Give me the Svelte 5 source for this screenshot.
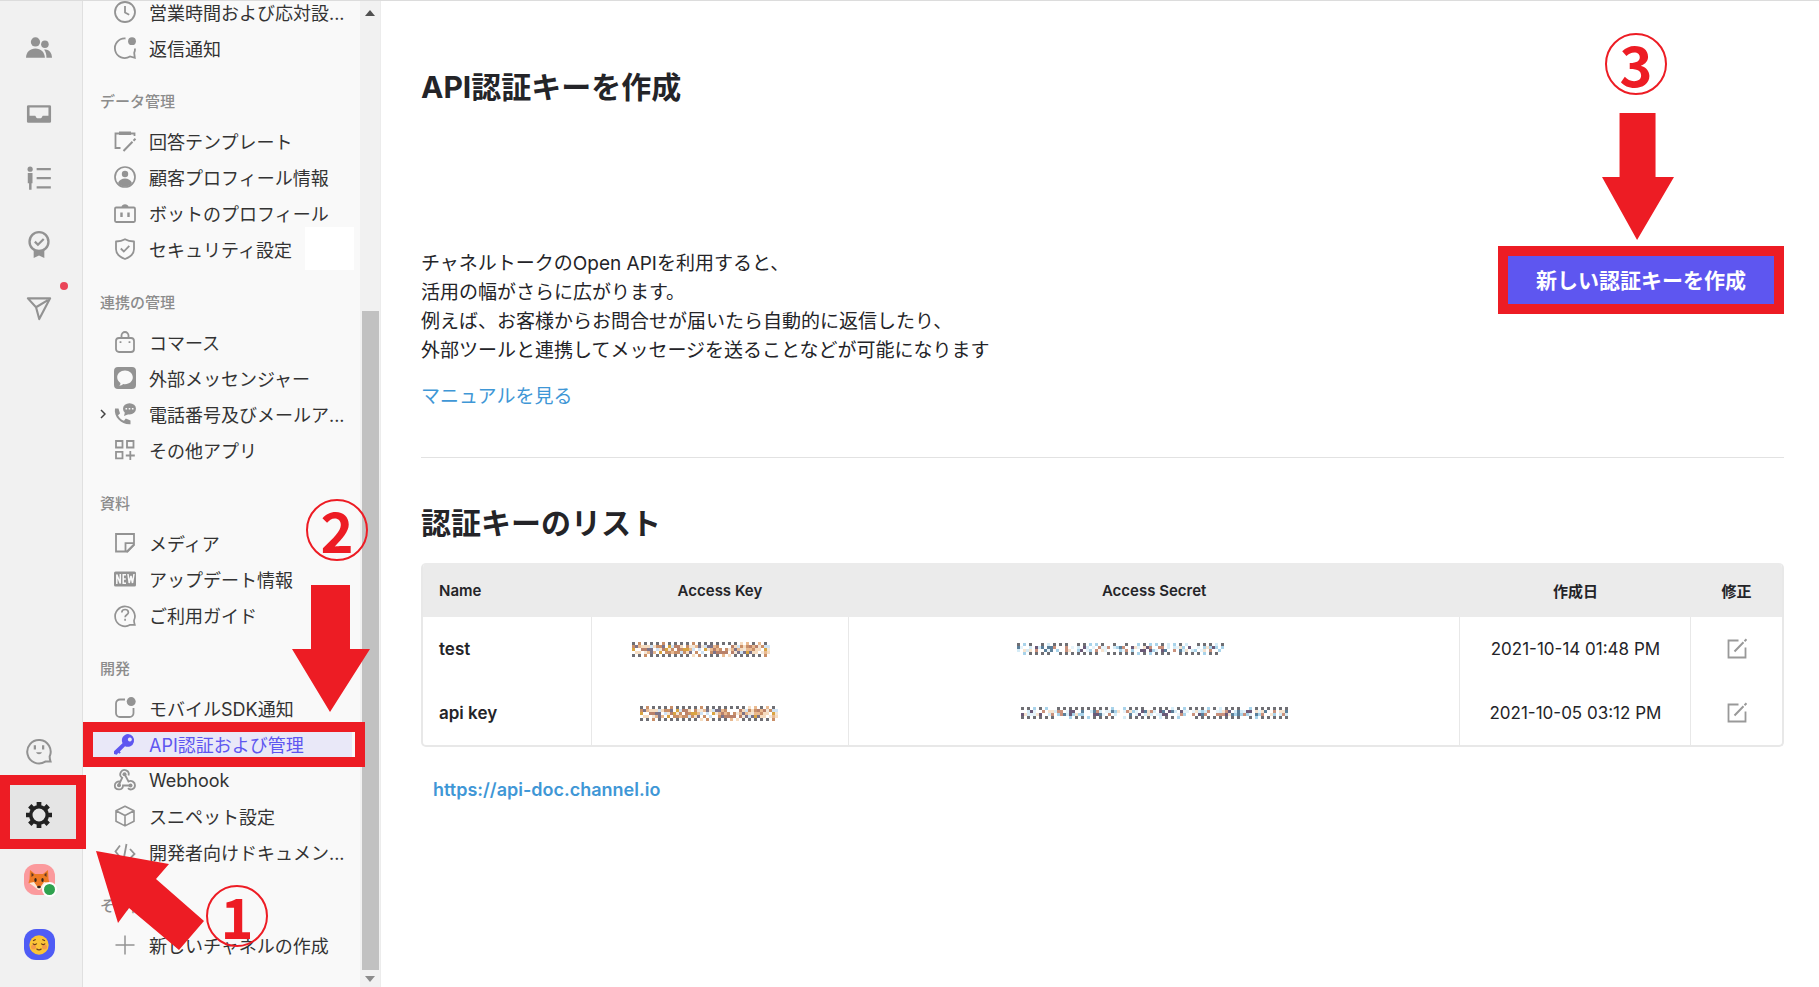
<script lang="ts">
  type NavItem = { icon: string; label: string; active?: boolean; expandable?: boolean; masked?: boolean }
  type NavGroup = { title: string; items: NavItem[] }
  type Masked = { seed: number; width: number; ink: number; rows: number; warm: boolean }

  const railTop = [
    { icon: 'people', label: '顧客' },
    { icon: 'inbox', label: '受信箱' },
    { icon: 'team', label: 'チーム' },
    { icon: 'badge', label: '実績' },
    { icon: 'send', label: '配信', dot: true },
  ]

  const groups: NavGroup[] = [
    {
      title: '',
      items: [
        { icon: 'clock', label: '営業時間および応対設...' },
        { icon: 'reply', label: '返信通知' },
      ],
    },
    {
      title: 'データ管理',
      items: [
        { icon: 'template', label: '回答テンプレート' },
        { icon: 'profile', label: '顧客プロフィール情報' },
        { icon: 'bot', label: 'ボットのプロフィール' },
        { icon: 'shield', label: 'セキュリティ設定', masked: true },
      ],
    },
    {
      title: '連携の管理',
      items: [
        { icon: 'bag', label: 'コマース' },
        { icon: 'messenger', label: '外部メッセンジャー' },
        { icon: 'phone', label: '電話番号及びメールア...', expandable: true },
        { icon: 'apps', label: 'その他アプリ' },
      ],
    },
    {
      title: '資料',
      items: [
        { icon: 'media', label: 'メディア' },
        { icon: 'new', label: 'アップデート情報' },
        { icon: 'help', label: 'ご利用ガイド' },
      ],
    },
    {
      title: '開発',
      items: [
        { icon: 'sdk', label: 'モバイルSDK通知' },
        { icon: 'key', label: 'API認証および管理', active: true },
        { icon: 'webhook', label: 'Webhook' },
        { icon: 'box', label: 'スニペット設定' },
        { icon: 'code', label: '開発者向けドキュメン...' },
      ],
    },
    {
      title: 'その他',
      items: [{ icon: 'plus', label: '新しいチャネルの作成' }],
    },
  ]

  const keys: { name: string; key: Masked; secret: Masked; created: string }[] = [
    {
      name: 'test',
      key: { seed: 7, width: 175, ink: 138, rows: 5, warm: true },
      secret: { seed: 23, width: 274, ink: 207, rows: 4, warm: false },
      created: '2021-10-14 01:48 PM',
    },
    {
      name: 'api key',
      key: { seed: 7, width: 159, ink: 138, rows: 5, warm: true },
      secret: { seed: 91, width: 267, ink: 267, rows: 4, warm: false },
      created: '2021-10-05 03:12 PM',
    },
  ]

  const warmTones = ['#f6dcc0', '#e9b98f', '#c98f68', '#fff', '#f3e6d8', '#d9a441', '#b9816a', '#cfe3f5', '#7d7488', '#fff']
  const coolTones = ['#fff', '#d5ecf7', '#a9d3ea', '#fff', '#f6e3cf', '#c9917c', '#5b7f9a', '#fff', '#6b5a78', '#e6f3fa']

  // Mosaic cells for a hidden key, dashed on the first and last row
  function mosaic(m: Masked) {
    let s = m.seed
    const next = () => (s = (s * 1103515245 + 12345) % 2147483648) / 2147483648
    const tones = m.warm ? warmTones : coolTones
    const cells: { x: number; y: number; fill: string }[] = []
    for (let c = 0; c < m.ink / 3; c++) {
      for (let r = 0; r < m.rows; r++) {
        const edge = r === 0 || r === m.rows - 1
        const pick = next()
        let fill = tones[Math.floor(pick * tones.length)]
        if (edge) fill = c % 2 ? '#fff' : pick > 0.3 ? '#6f6f74' : fill
        cells.push({ x: c * 3, y: r * 3, fill })
      }
    }
    return cells
  }
</script>

{#snippet icon(name: string, size = 22)}
  <svg
    class="icon"
    width={size}
    height={size}
    viewBox="0 0 22 22"
    fill="none"
    stroke="currentColor"
    stroke-width="1.8"
    aria-hidden="true"
  >
    {#if name === 'people'}
      <g fill="currentColor" stroke="none">
        <circle cx="8" cy="5" r="3.9" /><circle cx="16" cy="7" r="3.2" />
        <path d="M0 18.500c0-5 3.500-8 8-8s7.800 3 8 8z" /><path d="M15.300 11.500c4-.8 6.700 2.500 6.700 7h-4.700c0-3-.6-5-2-7z" />
      </g>
    {:else if name === 'inbox'}
      <path
        fill="currentColor"
        stroke="none"
        fill-rule="evenodd"
        d="M2 3.500h18a1.200 1.200 0 0 1 1.200 1.200v12.600a1.200 1.200 0 0 1-1.200 1.200H2a1.200 1.200 0 0 1-1.200-1.200V4.700A1.200 1.200 0 0 1 2 3.500zM3 5.500v7h4.700c.6 0 .7 2 1.800 2h3c1.100 0 1.200-2 1.800-2H19v-7z"
      />
    {:else if name === 'team'}
      <circle cx="3.500" cy="2.700" r="2.200" fill="currentColor" stroke="none" />
      <path d="M1.500 6h4v8.500h-.8V20H2.600v-5.500H1.500z" fill="currentColor" stroke="none" />
      <path d="M9 2.700h12M9 10.300h12M9 18h12" stroke-width="1.900" />
    {:else if name === 'badge'}
      <circle cx="11" cy="9" r="8" stroke-width="2" /><path d="m7.500 9 2.600 2.600L15 6.800" stroke-width="1.900" />
      <path d="M6.500 15.800h9v7L11 20.700l-4.500 2.100z" fill="currentColor" stroke="none" />
    {:else if name === 'send'}
      <path d="M1.600 2h18.800L11.200 19.500 8.500 9.500zM8.500 9.500l10-6" stroke-linejoin="round" />
    {:else if name === 'smile'}
      <path d="M20.800 20.800h-4.500A9.900 9.900 0 1 1 20 16.500c0 1.800.3 2.500.8 4.300z" stroke-width="1.700" />
      <path d="M7.500 7v3.500M14.500 7v3.500" stroke-width="1.900" /><path d="M8.500 13h5c-.7 2.200-4.300 2.200-5 0z" fill="currentColor" stroke="none" />
    {:else if name === 'gear'}
      <circle cx="11" cy="11" r="7" stroke-width="3" />
      <path d="M11 0v4M11 18v4M0 11h4M18 11h4M3.200 3.200l3 3M15.800 15.800l3 3M18.800 3.200l-3 3M6.200 15.800l-3 3" stroke-width="4" />
    {:else if name === 'clock'}
      <circle cx="11" cy="11" r="10" /><path d="M11 5v6.500l4.200 2.300" />
    {:else if name === 'reply'}
      <path d="M11.500 1.500A9.800 9.800 0 1 0 16 19.500l4.800 1.300-.6-5a9 9 0 0 0 .8-4.300" />
      <circle cx="18" cy="4.200" r="3.900" fill="currentColor" stroke="none" />
    {:else if name === 'template'}
      <path d="M6.500 18H1.500V3.500h19V6" /><path d="M5 1.500h12v3.500H5z" fill="currentColor" stroke="none" />
      <path d="m9.500 21 9-9.300M19.500 10.700l2-2" stroke-width="2" />
    {:else if name === 'profile'}
      <circle cx="11" cy="11" r="10" stroke-width="1.700" /><circle cx="11" cy="8" r="3.200" fill="currentColor" stroke="none" />
      <path d="M4 17c2-6 12-6 14 0-3.500 5-10.500 5-14 0z" fill="currentColor" stroke="none" />
    {:else if name === 'bot'}
      <rect x="1" y="5.500" width="20" height="14.500" rx="1.200" /><path d="M7.500 5c.3-3.800 6.700-3.800 7 0z" fill="currentColor" stroke="none" />
      <path d="M7.500 10.500v4.500M14.500 10.500v4.500" stroke-width="2.400" />
    {:else if name === 'shield'}
      <path d="M11 1.200c3 1.800 6 2.200 9 2.300v7.500c0 5.500-4 8.200-9 10-5-1.800-9-4.500-9-10V3.500c3-.1 6-.5 9-2.300z" stroke-linejoin="round" />
      <path d="m6.800 10.500 3 3 5.500-5.700" />
    {:else if name === 'bag'}
      <rect x="2" y="7" width="18" height="14" rx="3" /><path d="M7.500 7V4.500a3.500 3.500 0 0 1 7 0V7M6.500 10.200v1.800M15.500 10.200v1.800" />
    {:else if name === 'messenger'}
      <path
        d="M4 0h14a4 4 0 0 1 4 4v14a4 4 0 0 1-4 4H4a4 4 0 0 1-4-4V4a4 4 0 0 1 4-4zm7 3.500c-4.500 0-7.800 3-7.800 6.800 0 2.400 1.300 4.400 3.200 5.600.2 1-.4 2-1.200 2.800 1.700 0 3-.7 3.900-1.700.6.100 1.300.2 1.900.2 4.500 0 7.800-3.100 7.800-6.900S15.500 3.500 11 3.500z"
        fill="currentColor"
        stroke="none"
        fill-rule="evenodd"
      />
    {:else if name === 'phone'}
      <path
        d="M1 5.500h3.500l1.500 5-2 1.700c1.500 2.800 3.300 4.500 6 5.600l1.800-2.200 4.700 1.800v3.800c-8.500.8-17-7-15.500-15.700z"
        fill="currentColor"
        stroke="none"
      />
      <ellipse cx="15.500" cy="5.800" rx="6.500" ry="5.600" fill="currentColor" stroke="none" />
      <path d="m11 9-1 4 5-2z" fill="currentColor" stroke="none" />
      <path d="M11.500 5.800h1.600M14.700 5.800h1.600M17.900 5.800h1.600" stroke="#f9f9f9" stroke-width="1.600" />
    {:else if name === 'apps'}
      <path d="M2 2h6.500v6.500H2zM13 2h6.500v6.500H13zM2 12.800h6.500v6.500H2zM16.300 12v9M11.800 16.500h9" />
    {:else if name === 'media'}
      <path d="M2 2h18v11l-6.500 6.500H2zM11.500 19.500v-8.300H20" />
      <path d="m12.500 20 7.500-7.500" />
    {:else if name === 'new'}
      <rect x="0" y="3.500" width="22" height="15" rx="1.500" fill="currentColor" stroke="none" />
      <path
        d="M2.800 16V6.500L6.300 15.500V6M12 6.700H9.200v8.600H12M9.200 11h2.600M14 6l1.200 9 1.800-7 1.500 7L20 6"
        stroke="#f9f9f9"
        stroke-width="1.500"
      />
    {:else if name === 'help'}
      <path d="M20.800 20.800h-4.600A9.900 9.900 0 1 1 20 16.500c0 1.800.3 2.500.8 4.300z" stroke-width="1.700" />
      <path d="M7.800 8.500c0-4 6.600-4 6.600 0 0 2.300-3.300 2.300-3.300 4.700M11.100 14.800v2" stroke-width="1.700" />
    {:else if name === 'sdk'}
      <path d="M11 2.500H6a4 4 0 0 0-4 4V16a4 4 0 0 0 4 4h9.500a4 4 0 0 0 4-4v-5" />
      <circle cx="17.200" cy="4.600" r="4.500" fill="currentColor" stroke="none" />
    {:else if name === 'key'}
      <path
        d="M14 1a6.400 6.400 0 1 1-3 12.200l-5.200 5.200 1 1-1.500 1.300-1-1-1.500 2L0 21v-2.800l8.500-8A6.400 6.400 0 0 1 14 1zm1.800 3.500a2 2 0 1 0 .1 0z"
        fill="currentColor"
        stroke="none"
        fill-rule="evenodd"
      />
    {:else if name === 'webhook'}
      <path d="M14.500 6.500a4.200 4.200 0 1 0-6.300 2.200L5 15.500M10.500 5l4 7.500c3-1.500 6.500.5 6.500 3.800 0 4-4.800 5.500-7 2.800M6.500 12.500c-3-.6-5.700 1.200-5.700 4 0 5 8 5.500 8.200 0h7" />
      <g fill="currentColor" stroke="none"><circle cx="10.500" cy="5.300" r="2" /><circle cx="5" cy="16.300" r="2" /><circle cx="16.500" cy="16.500" r="2" /></g>
    {:else if name === 'box'}
      <path d="m11 1.200 9 4.500v10.600l-9 4.600-9-4.600V5.700zM2 5.700l9 4.800 9-4.800M11 10.500v10.400" stroke-linejoin="round" stroke-width="1.600" />
    {:else if name === 'code'}
      <path d="M6 4.500 1.500 10.500l6.500 8M16 8l4.500 5-5 5M12.500 3l-3 16" />
    {:else if name === 'plus'}
      <path d="M11 1.500v19M1.500 11h19" stroke-width="1.500" />
    {:else if name === 'edit'}
      <path d="M12.500 2.500h-10v17h17v-10" /><path d="m8.500 13.500 9-9.300M18.500 3.200l2-2" stroke-width="2" />
    {/if}
  </svg>
{/snippet}

{#snippet downArrow()}
  <path d="M19 0h39v64h20L38 127 0 64h19z" fill="#ed1c24" />
{/snippet}

{#snippet masked(m: Masked)}
  <svg class="masked" width={m.width} height={m.rows * 3} role="img" aria-label="非表示">
    {#each mosaic(m) as cell}
      <rect x={cell.x} y={cell.y} width="3" height="3" fill={cell.fill} />
    {/each}
  </svg>
{/snippet}

<div class="app">
  <nav class="rail" aria-label="メイン">
    {#each railTop as item}
      <button class="rail-btn" aria-label={item.label}>
        {@render icon(item.icon, 26)}
        {#if item.dot}<span class="unread"></span>{/if}
      </button>
    {/each}
    <span class="spacer"></span>
    <button class="rail-btn" aria-label="サポート">{@render icon('smile', 26)}</button>
    <div class="step">
      <button class="rail-btn current" aria-label="設定">{@render icon('gear', 26)}</button>
      <span class="frame frame-settings"></span>
      <svg class="arrow arrow-settings" width="108" height="99" aria-hidden="true">
        <path d="M0 0l73 13-13 15 48 42-25 29-50-42-11 15z" fill="#ed1c24" />
      </svg>
      <span class="number number-settings">1</span>
    </div>
    <button class="rail-btn" aria-label="チャネル">
      <span class="avatar pink">
        <svg width="22" height="22" viewBox="0 0 22 22" aria-hidden="true">
          <path d="M2 1l5 4h8l5-4 .5 9 1 4-5.500 3-4 4h-2l-4-4L.5 14l1-4z" fill="#ed7a25" />
          <path d="M3.500 3.500 6 6 3.500 8zM18.500 3.500 16 6l2.500 2z" fill="#5c3427" />
          <path d="M1 14l5-1 3.500 5L11 17l1.500 1L16 13l5 1-5 3.500-4 3.500h-2l-4-3.500z" fill="#fbe9d8" />
          <ellipse cx="7.500" cy="11" rx="1.200" ry="1.900" fill="#33251f" /><ellipse cx="14.500" cy="11" rx="1.200" ry="1.900" fill="#33251f" />
          <ellipse cx="11" cy="18" rx="1.900" ry="1.200" fill="#33251f" />
        </svg>
        <span class="online"></span>
      </span>
    </button>
    <button class="rail-btn" aria-label="マイプロフィール">
      <span class="avatar blue">
        <svg width="20" height="20" viewBox="0 0 20 20" aria-hidden="true">
          <circle cx="10" cy="10" r="9.700" fill="#fbc437" />
          <circle cx="4.500" cy="12" r="2.500" fill="#f59a4a" /><circle cx="15.500" cy="12" r="2.500" fill="#f59a4a" />
          <path d="M3.800 8.500c1 1.400 3 1.400 4 0M12.200 8.500c1 1.400 3 1.400 4 0M7.500 13.700c1.500 1.300 3.500 1.300 5 0M4 5.800l2.700-1.300M16 5.800l-2.700-1.300" fill="none" stroke="#6b3d1c" stroke-width="1.200" />
        </svg>
      </span>
    </button>
  </nav>

  <aside class="sidebar">
    <nav class="menu" aria-label="設定">
      {#each groups as group}
        {#if group.title}<h3>{group.title}</h3>{/if}
        <ul>
          {#each group.items as item}
            <li class:active={item.active}>
              {#if item.expandable}
                <svg class="chevron" width="6" height="10" viewBox="0 0 6 10" aria-hidden="true">
                  <path d="m1 1 4 4-4 4" fill="none" stroke="#444" stroke-width="1.500" />
                </svg>
              {/if}
              <a href="#{item.icon}">{@render icon(item.icon)}<span>{item.label}</span></a>
              {#if item.masked}<span class="patch"></span>{/if}
              {#if item.active}
                <span class="frame frame-api"></span>
                <svg class="arrow arrow-api" width="78" height="127" aria-hidden="true">{@render downArrow()}</svg>
                <span class="number number-api">2</span>
              {/if}
            </li>
          {/each}
        </ul>
      {/each}
    </nav>
    <div class="scrollbar" aria-hidden="true">
      <svg width="10" height="6" viewBox="0 0 10 6"><path d="M0 6 5 0l5 6z" fill="#505050" /></svg>
      <div class="track"><div class="thumb"></div></div>
      <svg width="10" height="6" viewBox="0 0 10 6"><path d="m0 0 5 6 5-6z" fill="#8b8b8b" /></svg>
    </div>
  </aside>

  <main>
    <h1>API認証キーを作成</h1>

    <section class="intro">
      <div class="intro-text">
        <p>
          チャネルトークのOpen APIを利用すると、<br />活用の幅がさらに広がります。<br
          />例えば、お客様からお問合せが届いたら自動的に返信したり、<br />外部ツールと連携してメッセージを送ることなどが可能になります
        </p>
        <a href="#manual">マニュアルを見る</a>
      </div>
      <div class="create">
        <button class="create-btn">新しい認証キーを作成</button>
        <span class="frame frame-create"></span>
        <svg class="arrow arrow-create" width="72" height="127" viewBox="0 0 78 127" preserveAspectRatio="none" aria-hidden="true">
          {@render downArrow()}
        </svg>
        <span class="number number-create">3</span>
      </div>
    </section>

    <h2>認証キーのリスト</h2>

    <div class="table-box">
      <table>
        <colgroup>
          <col class="c-name" /><col class="c-key" /><col /><col class="c-date" /><col class="c-edit" />
        </colgroup>
        <thead>
          <tr><th class="left">Name</th><th>Access Key</th><th>Access Secret</th><th>作成日</th><th>修正</th></tr>
        </thead>
        <tbody>
          {#each keys as row}
            <tr>
              <th class="left" scope="row">{row.name}</th>
              <td>{@render masked(row.key)}</td>
              <td>{@render masked(row.secret)}</td>
              <td>{row.created}</td>
              <td><button class="edit" aria-label="{row.name}を修正">{@render icon('edit')}</button></td>
            </tr>
          {/each}
        </tbody>
      </table>
    </div>

    <a class="doc" href="https://api-doc.channel.io">https://api-doc.channel.io</a>
  </main>
</div>

<style>
  :global(body) {
    margin: 0;
    background: #fff;
  }

  .app {
    display: flex;
    height: 100vh;
    overflow: hidden;
    position: relative;
    box-sizing: border-box;
    border-top: 1px solid #dcdcdc;
    font-family: Inter, 'Noto Sans CJK JP', sans-serif;
    color: #242428;
  }

  button {
    font: inherit;
    border: 0;
    padding: 0;
    background: none;
    cursor: pointer;
  }

  a {
    color: #3f97d6;
    text-decoration: none;
  }

  .icon {
    display: block;
    flex: none;
    overflow: visible;
  }

  /* Icon rail */
  .rail {
    flex: none;
    display: flex;
    flex-direction: column;
    width: 83px;
    box-sizing: border-box;
    padding: 15px 0 10px;
    background: #f1f1f1;
    border-right: 1px solid #e0e0e0;
  }

  .rail-btn {
    position: relative;
    display: flex;
    flex: none;
    width: 100%;
    height: 65px;
    padding-right: 4px;
    align-items: center;
    justify-content: center;
    color: #929292;
  }

  .rail-btn.current {
    background: #e5e5e5;
    color: #222;
  }

  .spacer {
    flex: 1;
  }

  .unread {
    position: absolute;
    top: 6px;
    right: 14px;
    width: 8px;
    height: 8px;
    border-radius: 50%;
    background: #ea4558;
  }

  .avatar {
    position: relative;
    display: flex;
    align-items: center;
    justify-content: center;
    width: 31px;
    height: 31px;
    border-radius: 12px;
  }

  .pink {
    background: #fb9a9d;
  }
  .blue {
    background: #4f5cf5;
  }

  .online {
    position: absolute;
    right: -2px;
    bottom: -2px;
    width: 11px;
    height: 11px;
    border: 2px solid #fff;
    border-radius: 50%;
    background: #2fa24f;
  }

  /* Settings menu */
  .sidebar {
    flex: none;
    display: flex;
    width: 297px;
    background: #f9f9f9;
    border-right: 1px solid #ececec;
  }

  .menu {
    flex: 1;
    margin-top: -7px;
  }

  h3 {
    box-sizing: border-box;
    height: 57px;
    margin: 0;
    padding: 14px 0 0 17px;
    font-size: 15px;
    line-height: 43px;
    font-weight: 500;
    color: #8c8c8c;
  }

  ul {
    margin: 0;
    padding: 0;
    list-style: none;
  }

  li {
    position: relative;
  }

  li a {
    display: flex;
    align-items: center;
    gap: 13px;
    height: 36px;
    margin-right: 8px;
    padding-left: 31px;
    font-size: 18px;
    white-space: nowrap;
    color: #333;
  }

  li .icon {
    color: #939393;
  }

  li.active a {
    background: #e9e8f8;
    color: #5e56f0;
  }

  li.active .icon {
    color: #5e56f0;
  }

  .chevron {
    position: absolute;
    left: 17px;
    top: 13px;
  }

  .patch {
    position: absolute;
    right: 6px;
    top: -4px;
    width: 49px;
    height: 43px;
    background: #fff;
  }

  .scrollbar {
    display: flex;
    flex-direction: column;
    align-items: center;
    width: 20px;
    box-sizing: border-box;
    padding: 9px 0 5px;
    background: #f1f1f1;
  }

  .track {
    flex: 1;
    display: flex;
    flex-direction: column;
    justify-content: flex-end;
    margin: 6px 0;
  }

  .thumb {
    width: 17px;
    height: 69.5%;
    background: #c1c1c1;
  }

  /* Content */
  main {
    flex: 1;
    min-width: 0;
    padding: 66px 35px 0 40px;
  }

  h1,
  h2 {
    margin: 0;
    font-size: 30px;
    line-height: 40px;
    font-weight: 700;
  }

  .intro {
    display: flex;
    justify-content: space-between;
    align-items: flex-start;
    margin-top: 139px;
    padding-bottom: 46px;
    border-bottom: 1px solid #e2e2e2;
    font-size: 19px;
    line-height: 29px;
  }

  .intro-text {
    padding-top: 3px;
  }

  .intro p {
    margin: 0 0 17px;
  }

  .create {
    position: relative;
    flex: none;
    padding: 8px;
  }

  .create-btn {
    height: 52px;
    padding: 0 30px;
    background: #5e56f0;
    color: #fff;
    font-size: 21px;
    font-weight: 700;
  }

  h2 {
    margin: 45px 0 20px;
  }

  .table-box {
    border: 2px solid #e8e8e8;
    border-top: 0;
    border-radius: 5px;
    overflow: hidden;
  }

  table {
    width: 100%;
    table-layout: fixed;
    border-collapse: collapse;
    font-size: 17px;
  }

  .c-name {
    width: 12.4%;
  }
  .c-key {
    width: 18.9%;
  }
  .c-date {
    width: 17%;
  }
  .c-edit {
    width: 6.7%;
  }

  th,
  td {
    padding: 0;
    text-align: center;
    white-space: nowrap;
  }

  th {
    font-weight: 600;
  }

  .left {
    padding-left: 16px;
    text-align: left;
  }

  thead th {
    height: 54px;
    background: #ebebeb;
    font-size: 15px;
  }

  tbody th,
  tbody td {
    height: 64px;
  }

  td {
    border-left: 1px solid #e8e8e8;
  }

  .masked,
  .edit {
    display: block;
    margin: 0 auto;
  }

  .edit {
    color: #999;
  }

  .doc {
    display: inline-block;
    margin: 31px 0 0 12px;
    font-size: 18px;
    line-height: 24px;
    font-weight: 600;
  }

  /* Walkthrough marks over the screen */
  .step {
    position: relative;
  }

  .frame,
  .arrow,
  .number {
    position: absolute;
    z-index: 2;
    box-sizing: border-box;
    pointer-events: none;
  }

  .frame {
    border: 10px solid #ed1c24;
  }

  .number {
    width: 62px;
    height: 62px;
    border: 2px solid #ed1c24;
    border-radius: 50%;
    color: #ed1c24;
    font-family: 'Noto Sans CJK JP', sans-serif;
    font-size: 56px;
    line-height: 56px;
    font-weight: 700;
    text-align: center;
  }

  .frame-settings {
    inset: -7px -4px -2px 0;
  }
  .arrow-settings {
    left: 96px;
    top: 69px;
  }
  .number-settings {
    left: 206px;
    top: 103px;
  }

  .frame-api {
    inset: -4px -5px -5px 0;
  }
  .arrow-api {
    left: 209px;
    top: -141px;
  }
  .number-api {
    left: 223px;
    top: -227px;
  }

  .frame-create {
    inset: 0;
  }
  .arrow-create {
    right: 110px;
    top: -133px;
  }
  .number-create {
    right: 117px;
    top: -213px;
  }
</style>
